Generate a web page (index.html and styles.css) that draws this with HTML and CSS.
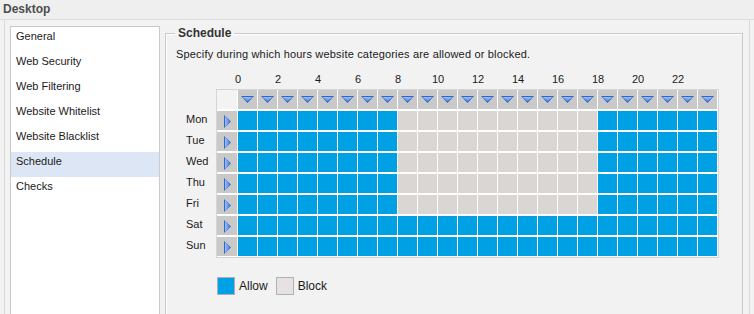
FILE: index.html
```html
<!DOCTYPE html>
<html>
<head>
<meta charset="utf-8">
<link rel="stylesheet" href="styles.css">
</head>
<body>
<div class="titlebar">Desktop</div>
<div class="panel">
  <ul class="nav">
    <li>General</li>
    <li>Web Security</li>
    <li>Web Filtering</li>
    <li>Website Whitelist</li>
    <li>Website Blacklist</li>
    <li class="sel">Schedule</li>
    <li>Checks</li>
  </ul>
  <fieldset class="box">
    <legend>Schedule</legend>
    <p class="desc">Specify during which hours website categories are allowed or blocked.</p>
    <div class="hours">
      <span>0</span><span>2</span><span>4</span><span>6</span><span>8</span><span>10</span><span>12</span><span>14</span><span>16</span><span>18</span><span>20</span><span>22</span>
    </div>
    <div class="sched">
      <div class="days">
        <span>Mon</span><span>Tue</span><span>Wed</span><span>Thu</span><span>Fri</span><span>Sat</span><span>Sun</span>
      </div>
      <div class="grid">
        <div class="cn"></div>
        <div class="hh"></div><div class="hh"></div><div class="hh"></div><div class="hh"></div><div class="hh"></div><div class="hh"></div><div class="hh"></div><div class="hh"></div><div class="hh"></div><div class="hh"></div><div class="hh"></div><div class="hh"></div><div class="hh"></div><div class="hh"></div><div class="hh"></div><div class="hh"></div><div class="hh"></div><div class="hh"></div><div class="hh"></div><div class="hh"></div><div class="hh"></div><div class="hh"></div><div class="hh"></div><div class="hh"></div>

        <div class="rh"></div>
        <div class="a"></div><div class="a"></div><div class="a"></div><div class="a"></div><div class="a"></div><div class="a"></div><div class="a"></div><div class="a"></div>
        <div class="b"></div><div class="b"></div><div class="b"></div><div class="b"></div><div class="b"></div><div class="b"></div><div class="b"></div><div class="b"></div><div class="b"></div><div class="b"></div>
        <div class="a"></div><div class="a"></div><div class="a"></div><div class="a"></div><div class="a"></div><div class="a"></div>

        <div class="rh"></div>
        <div class="a"></div><div class="a"></div><div class="a"></div><div class="a"></div><div class="a"></div><div class="a"></div><div class="a"></div><div class="a"></div>
        <div class="b"></div><div class="b"></div><div class="b"></div><div class="b"></div><div class="b"></div><div class="b"></div><div class="b"></div><div class="b"></div><div class="b"></div><div class="b"></div>
        <div class="a"></div><div class="a"></div><div class="a"></div><div class="a"></div><div class="a"></div><div class="a"></div>

        <div class="rh"></div>
        <div class="a"></div><div class="a"></div><div class="a"></div><div class="a"></div><div class="a"></div><div class="a"></div><div class="a"></div><div class="a"></div>
        <div class="b"></div><div class="b"></div><div class="b"></div><div class="b"></div><div class="b"></div><div class="b"></div><div class="b"></div><div class="b"></div><div class="b"></div><div class="b"></div>
        <div class="a"></div><div class="a"></div><div class="a"></div><div class="a"></div><div class="a"></div><div class="a"></div>

        <div class="rh"></div>
        <div class="a"></div><div class="a"></div><div class="a"></div><div class="a"></div><div class="a"></div><div class="a"></div><div class="a"></div><div class="a"></div>
        <div class="b"></div><div class="b"></div><div class="b"></div><div class="b"></div><div class="b"></div><div class="b"></div><div class="b"></div><div class="b"></div><div class="b"></div><div class="b"></div>
        <div class="a"></div><div class="a"></div><div class="a"></div><div class="a"></div><div class="a"></div><div class="a"></div>

        <div class="rh"></div>
        <div class="a"></div><div class="a"></div><div class="a"></div><div class="a"></div><div class="a"></div><div class="a"></div><div class="a"></div><div class="a"></div>
        <div class="b"></div><div class="b"></div><div class="b"></div><div class="b"></div><div class="b"></div><div class="b"></div><div class="b"></div><div class="b"></div><div class="b"></div><div class="b"></div>
        <div class="a"></div><div class="a"></div><div class="a"></div><div class="a"></div><div class="a"></div><div class="a"></div>

        <div class="rh"></div>
        <div class="a"></div><div class="a"></div><div class="a"></div><div class="a"></div><div class="a"></div><div class="a"></div><div class="a"></div><div class="a"></div><div class="a"></div><div class="a"></div><div class="a"></div><div class="a"></div><div class="a"></div><div class="a"></div><div class="a"></div><div class="a"></div><div class="a"></div><div class="a"></div><div class="a"></div><div class="a"></div><div class="a"></div><div class="a"></div><div class="a"></div><div class="a"></div>

        <div class="rh"></div>
        <div class="a"></div><div class="a"></div><div class="a"></div><div class="a"></div><div class="a"></div><div class="a"></div><div class="a"></div><div class="a"></div><div class="a"></div><div class="a"></div><div class="a"></div><div class="a"></div><div class="a"></div><div class="a"></div><div class="a"></div><div class="a"></div><div class="a"></div><div class="a"></div><div class="a"></div><div class="a"></div><div class="a"></div><div class="a"></div><div class="a"></div><div class="a"></div>
      </div>
    </div>
    <div class="legend">
      <span class="sw sw-a"></span><span class="lt">Allow</span>
      <span class="sw sw-b"></span><span class="lt">Block</span>
    </div>
  </fieldset>
</div>
</body>
</html>
```

FILE: styles.css
```css
html, body {
  margin: 0;
  padding: 0;
}
body {
  background: #f2f2f2;
  font-family: "Liberation Sans", Arial, sans-serif;
  font-size: 11px;
  color: #1a1a1a;
  overflow: hidden;
}
.titlebar {
  height: 20px;
  line-height: 18px;
  padding-left: 3px;
  font-size: 12px;
  font-weight: bold;
  color: #4e4e4e;
  background: #efefef;
  border-bottom: 1px solid #dcdcdc;
  box-sizing: border-box;
}
.panel {
  margin-left: 4px;
  width: 746px;
  height: 320px;
  border-left: 1px solid #d9d9d9;
  border-right: 1px solid #d9d9d9;
  padding: 6px 6px 0 5px;
  display: flex;
  gap: 5px;
  box-sizing: border-box;
}
.nav {
  list-style: none;
  margin: 0;
  padding: 0;
  width: 150px;
  flex: none;
  background: #fff;
  border: 1px solid #cbcbcb;
  box-sizing: border-box;
}
.nav li {
  height: 25px;
  padding: 2px 0 0 5px;
  line-height: 14px;
  box-sizing: border-box;
}
.nav li.sel {
  background: #dde6f4;
}
.box {
  flex: 1;
  margin: 0;
  padding: 7px 10px 0 10px;
  border: 1px solid #c6c8d2;
  box-shadow: inset 1px 1px 0 #fff;
  min-width: 0;
}
.box legend {
  font-size: 12px;
  font-weight: bold;
  color: #333;
  padding: 0 3px;
  margin-left: -1px;
  line-height: 14px;
}
.desc {
  margin: 0;
  line-height: 14px;
  letter-spacing: 0.18px;
}
.hours {
  display: flex;
  gap: 20px;
  padding-left: 52px;
  margin-top: 11px;
  line-height: 14px;
  height: 14px;
}
.hours span {
  width: 20px;
  text-align: center;
}
.sched {
  display: flex;
  margin-top: 3px;
}
.days {
  width: 30px;
  margin-left: 10px;
  padding-top: 22px;
  display: flex;
  flex-direction: column;
}
.days span {
  height: 21px;
  line-height: 17px;
}
.grid {
  display: grid;
  grid-template-columns: 20px repeat(24, 19px);
  grid-auto-rows: 19px;
  column-gap: 1px;
  row-gap: 2px;
  border: 1px solid #d5d5d5;
  padding-right: 1px;
  background: #fff;
}
.cn {
  background: #f3f3f3;
}
.hh, .rh {
  background: #c9c9c9;
  display: grid;
  place-items: center;
}
.hh::before, .hh::after, .rh::before, .rh::after {
  content: "";
  grid-area: 1 / 1;
}
.hh::before {
  width: 13px;
  height: 7px;
  clip-path: polygon(0 0, 100% 0, 50% 100%);
  background: #3366cc;
}
.hh::after {
  width: 11px;
  height: 5px;
  margin-bottom: 1px;
  clip-path: polygon(0 0, 100% 0, 50% 100%);
  background: linear-gradient(#9dc0f4, #4b7edb);
}
.rh {
  justify-items: start;
  padding-left: 7px;
  box-sizing: border-box;
}
.rh::before {
  width: 7px;
  height: 13px;
  margin-top: 2px;
  clip-path: polygon(0 0, 100% 50%, 0 100%);
  background: #3366cc;
}
.rh::after {
  width: 5px;
  height: 11px;
  margin-top: 2px;
  margin-left: 1px;
  clip-path: polygon(0 0, 100% 50%, 0 100%);
  background: linear-gradient(90deg, #9dc0f4, #4b7edb);
}
.a {
  background: #00a0e4;
}
.b {
  background: #dad6d4;
}
.legend {
  display: flex;
  align-items: center;
  margin-top: 19px;
  padding-left: 41px;
}
.sw {
  width: 16px;
  height: 16px;
  border: 1px solid #aeaec0;
}
.sw-a {
  background: #00a0e4;
}
.sw-b {
  background: #e5e2e1;
}
.lt {
  margin-left: 4px;
  margin-right: 8px;
  font-size: 12px;
}
```
